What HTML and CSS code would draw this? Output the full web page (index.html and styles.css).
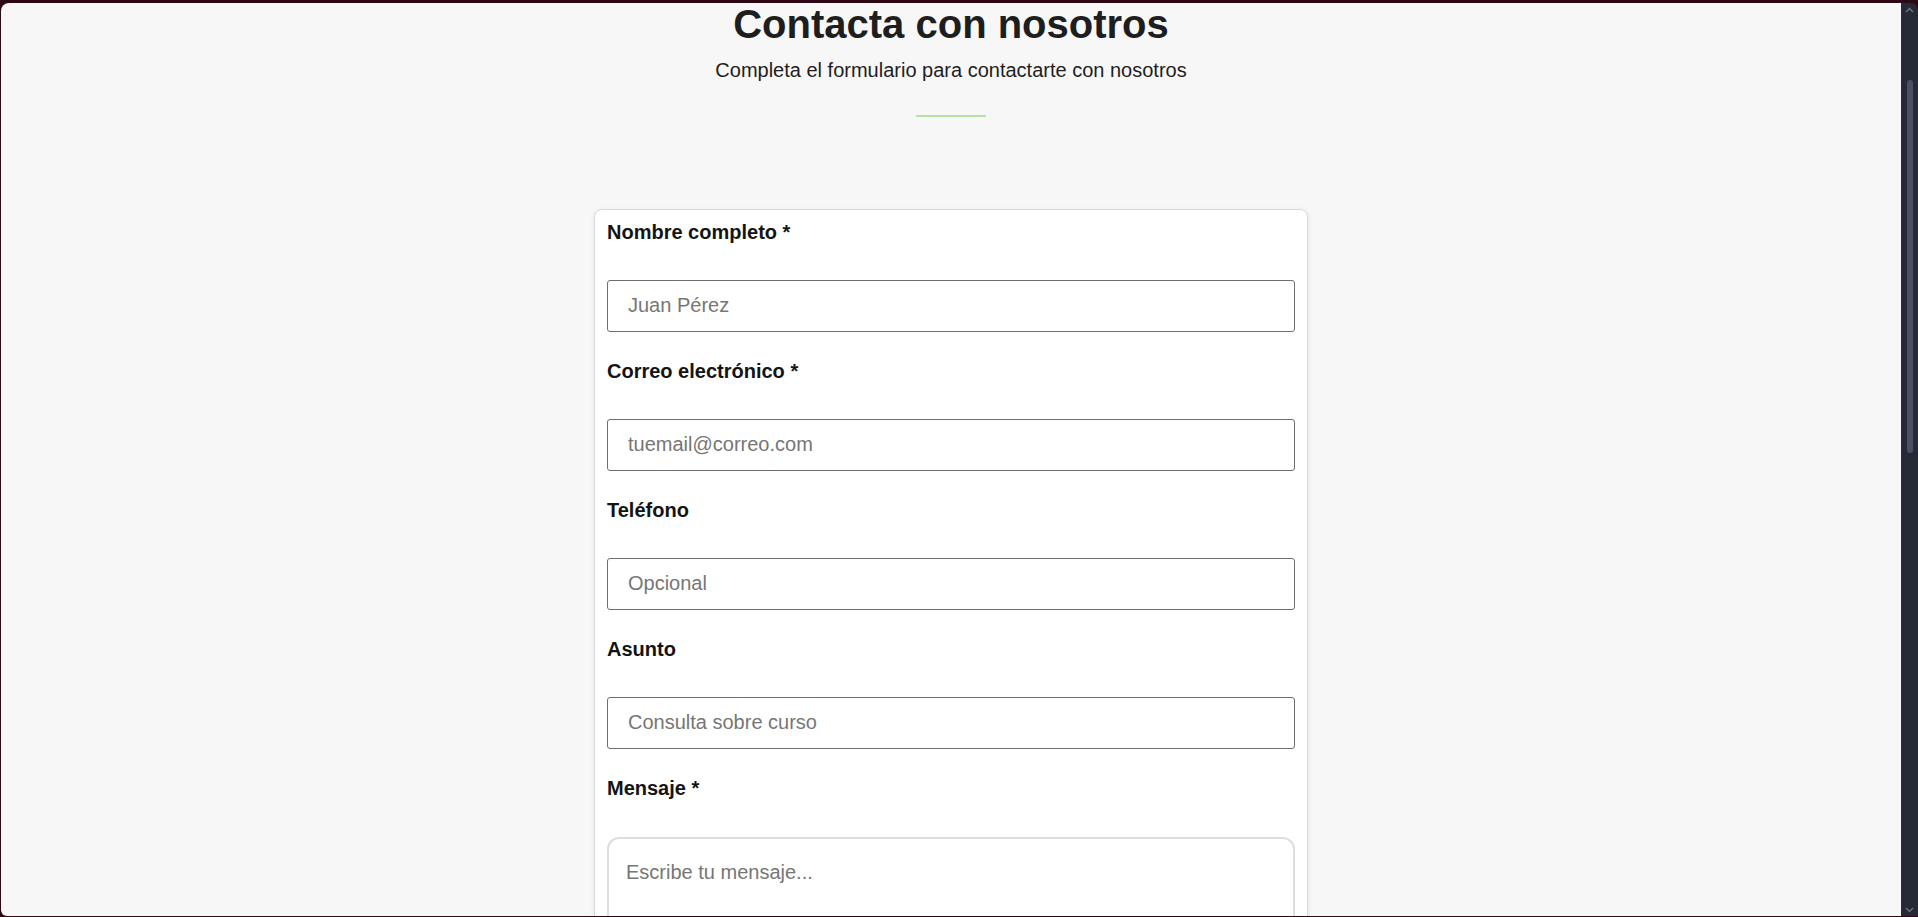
FILE: index.html
```html
<!DOCTYPE html>
<html lang="es">
<head>
<meta charset="utf-8">
<title>Contacta con nosotros</title>
<link rel="stylesheet" href="styles.css">
</head>
<body>
<div class="window">
  <main class="page">
    <header class="intro">
      <h1 class="title">Contacta con nosotros</h1>
      <p class="subtitle">Completa el formulario para contactarte con nosotros</p>
      <div class="divider"></div>
    </header>
    <form class="card">
      <div class="field">
        <label class="label" for="nombre">Nombre completo *</label>
        <input class="input" id="nombre" type="text" placeholder="Juan Pérez">
      </div>
      <div class="field">
        <label class="label" for="correo">Correo electrónico *</label>
        <input class="input" id="correo" type="email" placeholder="tuemail@correo.com">
      </div>
      <div class="field">
        <label class="label" for="telefono">Teléfono</label>
        <input class="input" id="telefono" type="tel" placeholder="Opcional">
      </div>
      <div class="field">
        <label class="label" for="asunto">Asunto</label>
        <input class="input" id="asunto" type="text" placeholder="Consulta sobre curso">
      </div>
      <div class="field">
        <label class="label" for="mensaje">Mensaje *</label>
        <textarea class="textarea" id="mensaje" placeholder="Escribe tu mensaje..."></textarea>
      </div>
    </form>
  </main>
  <div class="scrollbar">
    <svg class="arrow" width="9" height="6" viewBox="0 0 9 6"><path d="M1 5 L4.5 1.5 L8 5" fill="none" stroke="#6d7184" stroke-width="1.5"/></svg>
    <div class="thumb"></div>
    <div class="spacer"></div>
    <svg class="arrow" width="9" height="6" viewBox="0 0 9 6"><path d="M1 1 L4.5 4.5 L8 1" fill="none" stroke="#6d7184" stroke-width="1.5"/></svg>
  </div>
</div>
</body>
</html>
```
FILE: styles.css
```css
* { box-sizing: border-box; }

html, body {
  margin: 0;
  padding: 0;
  height: 917px;
  overflow: hidden;
  background: #2b0814;
}

body {
  font-family: "Liberation Sans", Arial, sans-serif;
  color: #1c1c1c;
}

.window {
  display: flex;
  height: 913px;
  margin: 3px 0 1px 1px;
  border-radius: 8px 8px 0 6px;
  overflow: hidden;
}

.page {
  flex: 1;
  background: #f7f7f7;
  overflow: hidden;
}

.intro {
  display: flex;
  flex-direction: column;
  align-items: center;
}

.title {
  margin: 0;
  font-size: 40px;
  line-height: 42px;
  font-weight: 700;
  color: #1e1e1e;
}

.subtitle {
  margin: 14px 0 0;
  font-size: 20px;
  line-height: 23px;
  color: #1e1e1e;
}

.divider {
  width: 70px;
  height: 2px;
  margin-top: 33px;
  background: #b9e0a3;
}

.card {
  width: 714px;
  margin: 92px auto 0;
  padding: 11px 12px 40px;
  background: #ffffff;
  border: 1px solid #d9d9d9;
  border-radius: 8px;
  box-shadow: 0 1px 5px rgba(0, 0, 0, 0.07);
}

.field {
  display: flex;
  flex-direction: column;
  margin-bottom: 28.5px;
}

.label {
  font-size: 20px;
  line-height: 23px;
  font-weight: 700;
  color: #141414;
  margin-bottom: 35.5px;
}

.input {
  height: 52px;
  padding: 0 20px;
  border: 1px solid #6e6e6e;
  border-radius: 3px;
  font-family: "Liberation Sans", Arial, sans-serif;
  font-size: 20px;
  color: #1e1e1e;
  background: #fff;
  outline: none;
}

.textarea {
  height: 220px;
  margin-top: 1px;
  padding: 22px 17px;
  border: 2px solid #dedede;
  border-radius: 12px;
  font-family: "Liberation Sans", Arial, sans-serif;
  font-size: 20px;
  line-height: 23px;
  resize: none;
  outline: none;
}

.input::placeholder,
.textarea::placeholder {
  color: #767676;
}

.scrollbar {
  width: 17px;
  background: #262a36;
  display: flex;
  flex-direction: column;
  align-items: center;
  padding: 4px 0 3px;
}

.arrow {
  display: block;
  flex: none;
}

.thumb {
  width: 6px;
  height: 373px;
  margin-top: 67px;
  border-radius: 3px;
  background: #4b4f66;
}

.spacer {
  flex: 1;
}
```
